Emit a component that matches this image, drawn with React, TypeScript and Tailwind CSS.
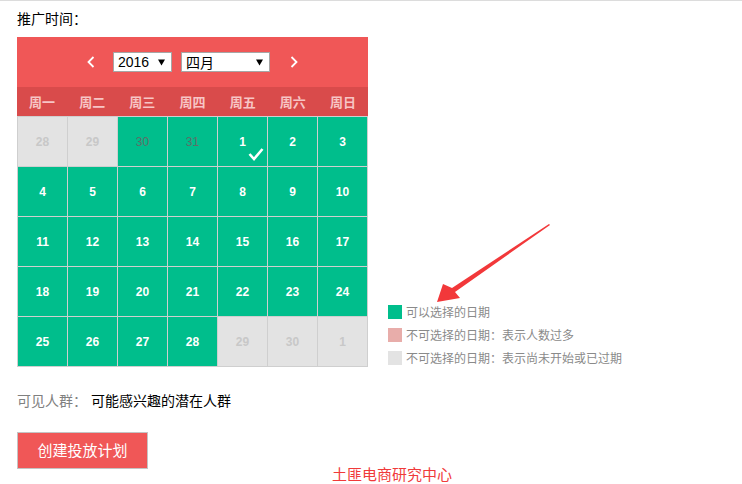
import React from "react";

type Cell = { d: number; kind: "off" | "ok" | "past"; check?: boolean };

const cells: Cell[] = [
  { d: 28, kind: "off" },
  { d: 29, kind: "off" },
  { d: 30, kind: "past" },
  { d: 31, kind: "past" },
  { d: 1, kind: "ok", check: true },
  ...Array.from({ length: 27 }, (_, i) => ({ d: i + 2, kind: "ok" as const })),
  { d: 29, kind: "off" },
  { d: 30, kind: "off" },
  { d: 1, kind: "off" },
];

const weeks = ["周一", "周二", "周三", "周四", "周五", "周六", "周日"];

const cjk = "font-['Noto_Sans_CJK_SC',sans-serif]";

function Chevron({ left }: { left?: boolean }) {
  return (
    <svg width="8" height="12" viewBox="0 0 8 12" className="block">
      <polyline
        points={left ? "6.5,1 1.5,6 6.5,11" : "1.5,1 6.5,6 1.5,11"}
        fill="none"
        stroke="#fff"
        strokeWidth="1.8"
      />
    </svg>
  );
}

function Caret() {
  return (
    <svg width="7" height="7" viewBox="0 0 7 7" className="block">
      <polygon points="0,0.5 7,0.5 3.5,6.5" fill="#000" />
    </svg>
  );
}

export default function App() {
  return (
    <div className={`relative w-[742px] h-[484px] overflow-hidden bg-white border-t border-[#dcdcdc] ${cjk}`}>
      <div className="pl-[17px]">
        <div className="pt-[7px] h-[36px] text-[14px] leading-[20px] text-black">推广时间：</div>
        <div className="flex">
          <div className="w-[351px]">
            <div className="h-[50px] bg-[#f05757] flex items-center justify-center">
              <Chevron left />
              <div className="ml-[18px] w-[59px] h-[20px] bg-white border border-[#a6a6a6] flex items-center justify-between pl-[4px] pr-[6px] text-[14px] font-['Liberation_Sans',sans-serif] text-black leading-none">
                <span>2016</span>
                <Caret />
              </div>
              <div className={`ml-[9px] w-[89px] h-[20px] bg-white border border-[#a6a6a6] flex items-center justify-between pl-[4px] pr-[6px] text-[14px] text-black leading-none`}>
                <span>四月</span>
                <Caret />
              </div>
              <div className="ml-[20px]">
                <Chevron />
              </div>
            </div>
            <div className="h-[29px] bg-[#d94b4b] grid grid-cols-7">
              {weeks.map((w) => (
                <div key={w} className="flex items-center justify-center text-[13px] font-bold text-[#f7c5c5]">
                  {w}
                </div>
              ))}
            </div>
            <div className="grid grid-cols-7 border-l border-t border-[#cfcfcf]">
              {cells.map((c, i) => (
                <div
                  key={i}
                  className={`relative h-[50px] border-r border-b border-[#cfcfcf] flex items-center justify-center text-[12px] font-['Liberation_Sans',sans-serif] ${
                    c.kind === "off"
                      ? "bg-[#e3e3e3] text-[#c8c8c8] font-bold"
                      : c.kind === "past"
                      ? "bg-[#00be8c] text-[#5f6e68]"
                      : "bg-[#00be8c] text-white font-bold"
                  }`}
                >
                  {c.d}
                  {c.check && (
                    <svg width="16" height="14" viewBox="0 0 16 14" className="absolute left-[30px] top-[30px]">
                      <polyline points="1.5,7 6,12 14.5,2" fill="none" stroke="#fff" strokeWidth="2.6" />
                    </svg>
                  )}
                </div>
              ))}
            </div>
          </div>
          <div className="ml-[20px] self-end mb-[-2px] flex flex-col text-[12px] text-[#8a8a8a]">
            {[
              ["bg-[#00be8c]", "可以选择的日期"],
              ["bg-[#e8adaa]", "不可选择的日期：表示人数过多"],
              ["bg-[#e3e3e3]", "不可选择的日期：表示尚未开始或已过期"],
            ].map(([bg, t]) => (
              <div key={t} className="h-[23px] flex items-center">
                <div className={`w-[14px] h-[14px] ${bg}`} />
                <span className="ml-[4px] leading-none">{t}</span>
              </div>
            ))}
          </div>
        </div>
        <div className="mt-[23px] h-[20px] flex items-center text-[14px] leading-[20px]">
          <span className="text-[#808080]">可见人群：</span>
          <span className="ml-[4px] text-black">可能感兴趣的潜在人群</span>
        </div>
        <div className="mt-[22px] w-[131px] h-[37px] bg-[#f05757] border border-[#c4c4c4] flex items-center justify-center text-white text-[15px]">
          创建投放计划
        </div>
      </div>
      <div className="absolute left-[332px] top-[463px] text-[15px] leading-[20px] text-[#f03a3a]">土匪电商研究中心</div>
      <svg className="absolute left-0 top-0 pointer-events-none" width="742" height="484" viewBox="0 0 742 484">
        <polygon points="550,224 455,291 460,297 437,301 443,283 452,287 549,223" fill="#f2383a" />
      </svg>
    </div>
  );
}
